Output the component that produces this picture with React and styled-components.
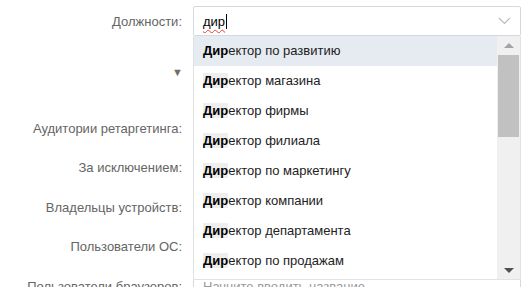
import React from 'react';
import styled, { createGlobalStyle } from 'styled-components';

const GlobalStyle = createGlobalStyle`
    body {
        margin: 0;
        background: #fff;
        font-family: "Liberation Sans", Arial, sans-serif;
        font-size: 13px;
        overflow: hidden;
    }
`;

const Form = styled.div`
    display: flex;
    flex-direction: column;
    padding-top: 6px;
    width: 521px;
`;

const Row = styled.div`
    display: grid;
    grid-template-columns: 182px 328px;
    column-gap: 11px;
    align-items: center;
    height: 30px;
    margin-top: ${p => p.gap || 0}px;
`;

const Label = styled.div`
    text-align: right;
    color: #656565;
    white-space: nowrap;
`;

const Field = styled.div`
    position: relative;
    height: 30px;
    box-sizing: border-box;
    border: 1px solid #d3d9de;
    border-radius: 2px;
    background: #fff;
    display: flex;
    align-items: center;
    padding: 0 9px;
    color: ${p => (p.muted ? '#999' : '#000')};
`;

const Typed = styled.span`
    text-decoration: underline wavy #e0443d;
    text-decoration-thickness: 1px;
    text-underline-offset: 3px;
`;

const Caret = styled.span`
    display: inline-block;
    width: 1px;
    height: 15px;
    background: #000;
    margin-left: 1px;
`;

const Chevron = styled.svg`
    position: absolute;
    right: 9px;
    top: 10px;
`;

const Toggle = styled.div`
    height: 20px;
    margin-top: 26px;
    padding-left: 172px;
    display: flex;
    align-items: center;
    color: #6f6f6f;
    font-size: 11px;
`;

const Dropdown = styled.div`
    position: absolute;
    left: -1px;
    right: -1px;
    top: 29px;
    height: 244px;
    box-sizing: border-box;
    border: 1px solid #dfe2e6;
    border-top: none;
    background: #fff;
    display: flex;
    z-index: 5;
`;

const List = styled.div`
    flex: 1;
    overflow: hidden;
`;

const Item = styled.div`
    height: 30px;
    line-height: 29px;
    padding-left: 9px;
    color: #222;
    white-space: nowrap;
    background: ${p => (p.active ? '#e5ebf1' : '#fff')};

    b {
        font-weight: bold;
        color: #000;
        background: ${p => (p.active ? 'transparent' : '#eeeeee')};
    }
`;

const Scrollbar = styled.div`
    width: 23px;
    background: #f0f0f0;
    display: flex;
    flex-direction: column;
    align-items: center;
    padding-top: 7px;
    box-sizing: border-box;
`;

const Arrow = styled.div`
    width: 0;
    height: 0;
    border-left: 5px solid transparent;
    border-right: 5px solid transparent;
    ${p => (p.down
        ? 'border-top: 5px solid #4f4f4f;'
        : 'border-bottom: 5px solid #a3a3a3;')}
    margin: ${p => (p.down ? 'auto 0 6px' : '0')};
`;

const Thumb = styled.div`
    width: 21px;
    height: 82px;
    margin-top: 7px;
    background: #c1c1c1;
`;

const items = [
    'по развитию',
    'магазина',
    'фирмы',
    'филиала',
    'по маркетингу',
    'компании',
    'департамента',
    'по продажам',
];

const rows = [
    'Аудитории ретаргетинга:',
    'За исключением:',
    'Владельцы устройств:',
    'Пользователи ОС:',
];

const App = () => {
    return (
        <>
            <GlobalStyle />
            <Form>
                <Row>
                    <Label>Должности:</Label>
                    <Field>
                        <Typed>дир</Typed>
                        <Caret />
                        <Chevron width="13" height="8" viewBox="0 0 13 8">
                            <path d="M1 1l5.5 5.5L12 1" fill="none" stroke="#b5bcc4" strokeWidth="1.2" />
                        </Chevron>
                        <Dropdown>
                            <List>
                                {items.map((item, index) => (
                                    <Item key={index} active={index === 0}>
                                        <b>Дир</b>ектор {item}
                                    </Item>
                                ))}
                            </List>
                            <Scrollbar>
                                <Arrow />
                                <Thumb />
                                <Arrow down />
                            </Scrollbar>
                        </Dropdown>
                    </Field>
                </Row>
                <Toggle>▼</Toggle>
                {rows.map((label, index) => (
                    <Row key={index} gap={index === 0 ? 31 : 9.5}>
                        <Label>{label}</Label>
                        <Field />
                    </Row>
                ))}
                <Row gap={9.5}>
                    <Label>Пользователи браузеров:</Label>
                    <Field muted>Начните вводить название</Field>
                </Row>
            </Form>
        </>
    );
};

export default App;
